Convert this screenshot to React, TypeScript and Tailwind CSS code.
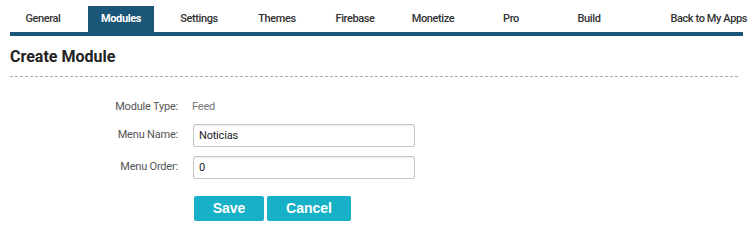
const tabs = ["General", "Modules", "Settings", "Themes", "Firebase", "Monetize", "Pro", "Build"];

export default function App() {
  return (
    <div className="w-[750px] h-[243px] bg-white font-['Roboto',sans-serif] text-[#333]">
      <nav className="pt-[6px] pl-[10px] pr-[7px]">
        <div className="flex h-[26px] gap-[12px] text-[11px] font-medium tracking-[-0.4px]">
          {tabs.map((t) => (
            <div
              key={t}
              className={
                t === "Modules"
                  ? "w-[66px] flex items-center justify-center bg-[#1b5578] text-white font-bold"
                  : "w-[66px] flex items-center justify-center"
              }
            >
              {t}
            </div>
          ))}
          <div className="flex-1 flex items-center justify-end -mr-[4px] whitespace-nowrap">
            Back to My Apps
          </div>
        </div>
        <div className="h-[4px] bg-[#1b5578]" />
      </nav>
      <div className="px-[10px]">
        <h1 className="mt-[10px] text-[16px] font-bold text-[#222] leading-[22px]">Create Module</h1>
        <div className="mt-[8px] border-t border-dashed border-[#aaa] mr-[2px]" />
      </div>
      <div className="mt-[22px] grid grid-cols-[178px_222px] gap-x-[15px] items-center text-[11px] tracking-[-0.2px]">
        <div className="text-right text-[#555]">Module Type:</div>
        <div className="text-[#777] -ml-[1px]">Feed</div>
        <div className="mt-[8px] text-right text-[#555]">Menu Name:</div>
        <input
          defaultValue="Noticias"
          className="mt-[8px] h-[23px] border border-[#c8c8c8] rounded-[2px] px-[5px] text-[11px] tracking-[-0.2px] text-[#222] outline-none shadow-[inset_0_1px_2px_rgba(0,0,0,0.08)]"
        />
        <div className="mt-[9px] text-right text-[#555]">Menu Order:</div>
        <input
          defaultValue="0"
          className="mt-[9px] h-[23px] border border-[#c8c8c8] rounded-[2px] px-[5px] text-[11px] text-[#222] outline-none shadow-[inset_0_1px_2px_rgba(0,0,0,0.08)]"
        />
      </div>
      <div className="mt-[17px] ml-[194px] flex gap-[3px] font-['Liberation_Sans',Arial,sans-serif] font-bold text-[14px] text-white">
        <button className="w-[70px] h-[25px] bg-[#17b1c7] rounded-[2px]">Save</button>
        <button className="w-[84px] h-[25px] bg-[#17b1c7] rounded-[2px]">Cancel</button>
      </div>
    </div>
  );
}
